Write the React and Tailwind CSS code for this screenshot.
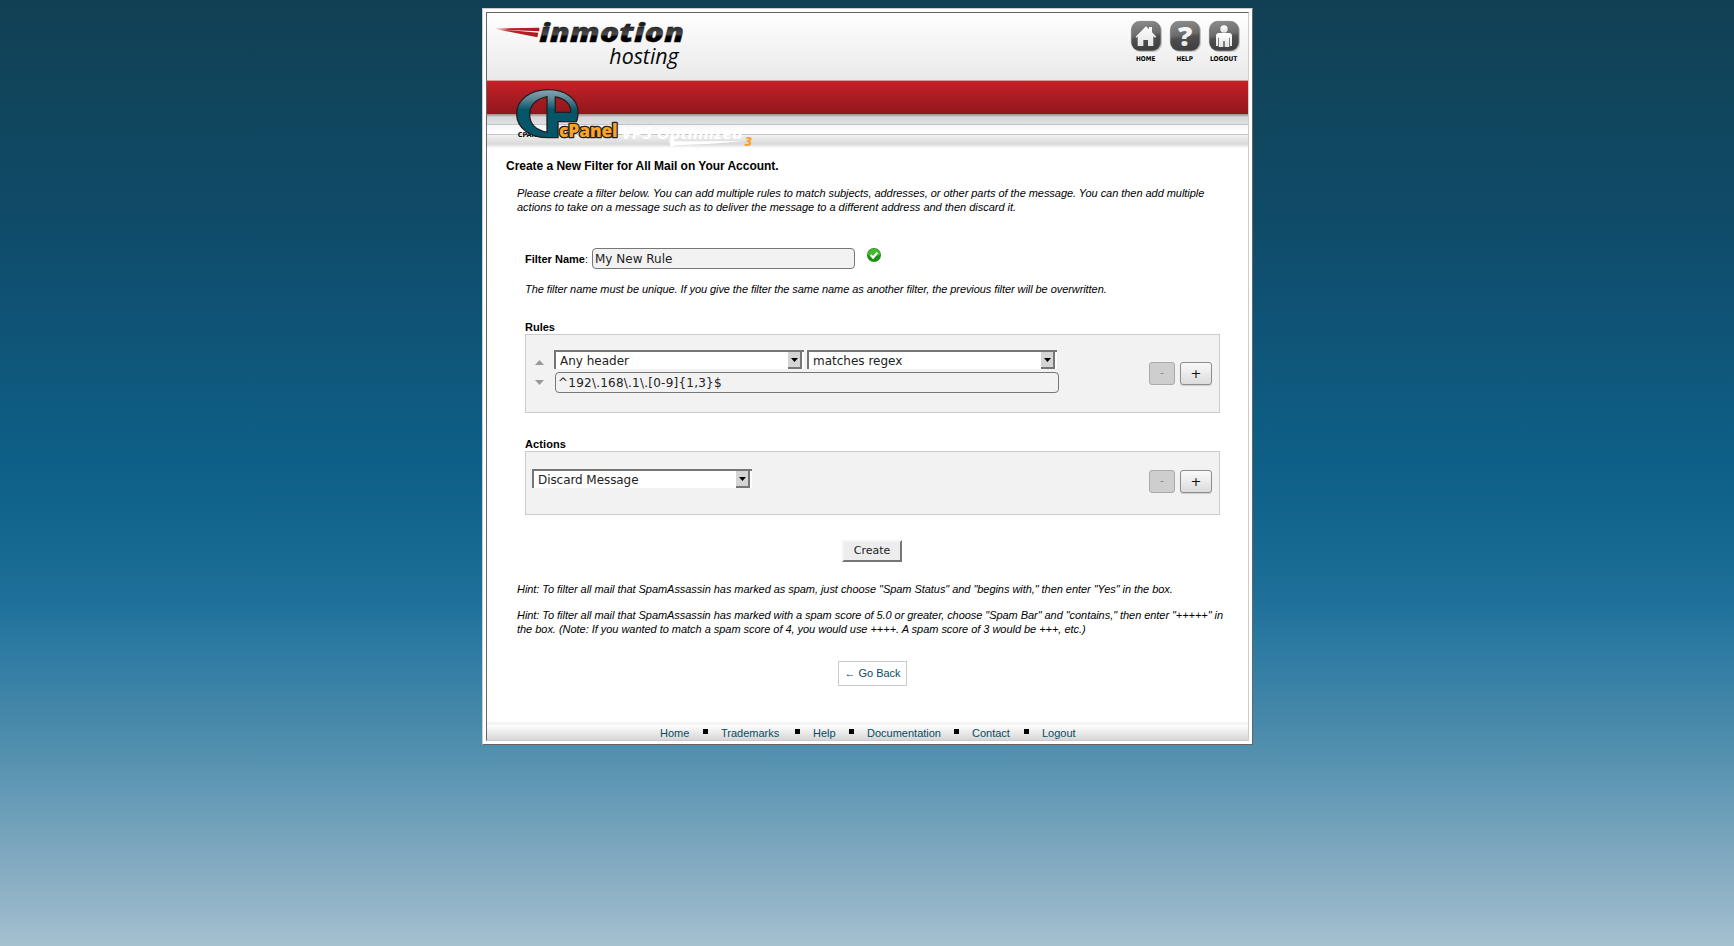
const SANS = "font-['Liberation_Sans',Arial,sans-serif]";

function InMotionLogo() {
  return (
    <svg className="block h-[51px] w-[190px] shrink-0 overflow-visible" viewBox="60 57 570 153">
      <defs>
        <linearGradient id="ink" x1="0" y1="0" x2="0" y2="1">
          <stop offset="0.25" stopColor="#1c1c1c" />
          <stop offset="0.55" stopColor="#4c4c4c" />
          <stop offset="0.62" stopColor="#000" />
          <stop offset="1" stopColor="#000" />
        </linearGradient>
        <linearGradient id="tail" x1="0" y1="0" x2="1" y2="0">
          <stop offset="0" stopColor="#c9252b" stopOpacity="0.45" />
          <stop offset="0.35" stopColor="#bb2026" />
          <stop offset="1" stopColor="#a81d22" />
        </linearGradient>
      </defs>
      <path d="M56 86 L190 83 L190 94 L96 90 Z" fill="url(#tail)" />
      <path d="M62 88 L104 91 L187 98 L184 112 Z" fill="url(#tail)" />
      <text x="190" y="126" fontFamily="'Noto Sans'" fontWeight="900" fontStyle="italic" fontSize="77" textLength="434" lengthAdjust="spacingAndGlyphs" fill="url(#ink)" stroke="#141414" strokeWidth="1">inmotion</text>
      <text x="400" y="191" fontFamily="'Open Sans'" fontStyle="italic" fontSize="67" textLength="208" lengthAdjust="spacingAndGlyphs" fill="#0a0a0a">hosting</text>
    </svg>
  );
}

function CPanelLogo() {
  return (
    <svg className="absolute left-[29px] top-[7px] h-[63px] w-[240px] overflow-visible" viewBox="120 261 720 189">
      <defs>
        <linearGradient id="teal" x1="0" y1="0" x2="0" y2="1">
          <stop offset="0" stopColor="#8aa6b4" />
          <stop offset="0.2" stopColor="#5b8494" />
          <stop offset="0.42" stopColor="#045668" />
          <stop offset="1" stopColor="#045668" />
        </linearGradient>
      </defs>
      <text x="125" y="411" fontFamily="'DejaVu Sans'" fontWeight="700" fontSize="20" textLength="84" lengthAdjust="spacingAndGlyphs" fill="#000">CPANEL</text>
      <path fillRule="evenodd" d="M216 269 C162 269 122 300 122 342 C122 385 164 413 216 413 L246 413 L246 365 L301 365 C305 358 306 348 306 334 C305 296 268 269 216 269 Z M213 290 C178 298 161 318 161 345 C161 371 180 390 213 397 Z M238 291 L238 337 L284 337 C285 313 268 296 238 291 Z" fill="url(#teal)" stroke="#231f20" strokeWidth="4" />
      <text x="249" y="411" fontFamily="'Open Sans'" fontWeight="800" fontSize="50" textLength="176" lengthAdjust="spacingAndGlyphs" fill="#f9a426" stroke="#231f20" strokeWidth="8" paintOrder="stroke" strokeLinejoin="round">cPanel</text>
      <text x="436" y="416" fontFamily="'Open Sans'" fontWeight="700" fontStyle="italic" fontSize="50" textLength="364" lengthAdjust="spacingAndGlyphs" fill="#fff">VPS Optimized</text>
      <path d="M583 412 L592 412 L596 424 H800 Q700 434 594 436 L590 440 H583 Z" fill="#fff" />
      <text x="806" y="438" fontFamily="'Open Sans'" fontWeight="800" fontStyle="italic" fontSize="38" fill="#f7a32b">3</text>
    </svg>
  );
}

function NavIcon({ label, width, children }) {
  return (
    <a className="block w-[39px]">
      <svg className="block h-[43px] w-[39px] overflow-visible" viewBox="0 0 117 129">
        <defs>
          <linearGradient id={"tile" + label} x1="0" y1="0" x2="0.15" y2="1">
            <stop offset="0" stopColor="#8e8e8e" />
            <stop offset="0.5" stopColor="#6c6c6c" />
            <stop offset="0.62" stopColor="#4f4f4f" />
            <stop offset="1" stopColor="#404040" />
          </linearGradient>
          <linearGradient id={"glyph" + label} x1="0" y1="0" x2="0" y2="1">
            <stop offset="0" stopColor="#fff" />
            <stop offset="1" stopColor="#e2e2e2" />
          </linearGradient>
        </defs>
        <rect x="4" y="4" width="89" height="89" rx="26" fill="#000" opacity="0.18" />
        <rect x="1" y="1" width="88" height="88" rx="25" fill={`url(#tile${label})`} stroke="#666" strokeWidth="1.5" />
        <g fill={`url(#glyph${label})`}>{children}</g>
        <text x={44 - width / 2} y="120" fontFamily="'DejaVu Sans'" fontWeight="700" fontSize="20" textLength={width} lengthAdjust="spacingAndGlyphs" fill="#000">{label}</text>
      </svg>
    </a>
  );
}

function Select({ className, children }) {
  return (
    <div className={"flex border-l-2 border-t-2 border-[#767676] bg-white font-['DejaVu_Sans',sans-serif] text-[12px] text-[#222] " + className}>
      <span className="grow pl-[4px] pt-px leading-[17px]">{children}</span>
      <span className="mr-[2px] flex h-[17px] w-[14px] shrink-0 items-center justify-center border-b-2 border-r-2 border-[#767676] bg-[#d4d4d4]">
        <svg className="block h-[4px] w-[7px]" viewBox="0 0 7 4"><path d="M0 0H7L3.5 4Z" fill="#000" /></svg>
      </span>
    </div>
  );
}

function TextInput({ className, children }) {
  return (
    <div className={"h-[21px] rounded-[4px] border border-[#777] bg-[#f2f2f2] pl-[2px] pt-px font-['DejaVu_Sans',sans-serif] text-[12px] leading-[19px] text-[#222] " + className}>{children}</div>
  );
}

function RowButtons() {
  return (
    <div className="flex gap-[5px] font-['DejaVu_Sans',sans-serif] text-[13px]">
      <div className="flex h-[23px] w-[26px] items-center justify-center rounded-[3px] border border-[#aaa] bg-[#cecece] text-[11px] text-[#888]">-</div>
      <div className="flex h-[23px] w-[32px] items-center justify-center rounded-[3px] border border-[#8e8e8e] bg-linear-to-b from-[#fafafa] to-[#dcdcdc] text-[#111] shadow-[0_1px_1px_rgba(0,0,0,0.15)]">+</div>
    </div>
  );
}

export default function App() {
  return (
    <div className={"flex h-[946px] w-full flex-col items-center bg-[linear-gradient(to_bottom,#123f54_0px,#10455c_90px,#0f4b68_220px,#0f5072_283px,#0f577b_362px,#0e6088_470px,#15688f_543px,#1f719b_603px,#327da4_663px,#4889aa_724px,#5f98b4_784px,#7aa6bd_844px,#93b4c8_905px,#a5c1cf_946px)] pl-px pt-[8px] text-[11px] text-black " + SANS}>
      <div className="h-[737px] w-[771px] border border-b-[#666] border-l-[#ccc] border-r-[#666] border-t-[#ccc] bg-white p-[3px]">
        <div className="flex h-full flex-col border border-b-[#ccc] border-l-[#666] border-r-[#ccc] border-t-[#666]">
          <header className="shrink-0">
            <div className="flex h-[67px] justify-between bg-linear-to-b from-white to-[#e9e9e9] pl-[9px] pt-[6px]">
              <InMotionLogo />
              <nav className="mt-[2px] flex">
                <NavIcon label="HOME" width={58}>
                  <path d="M14 47 L45 16 L54 25 V18 H63 V34 L76 47 L72 50 L67 46 V75 H51 V57 H37 V75 H20 V46 L17 50 Z" />
                </NavIcon>
                <NavIcon label="HELP" width={49}>
                  <text x="24" y="74" fontFamily="'Open Sans'" fontWeight="800" fontSize="80" textLength="43" lengthAdjust="spacingAndGlyphs">?</text>
                </NavIcon>
                <NavIcon label="LOGOUT" width={82}>
                  <circle cx="45" cy="24" r="11" />
                  <path d="M30 36 H60 Q69 36 69 45 V75 H63 V50 H61 V78 H47 V60 H43 V78 H29 V50 H27 V75 H21 V45 Q21 36 30 36 Z" />
                </NavIcon>
              </nav>
            </div>
            <div className="relative h-[70px]">
              <div className="h-px bg-[#dd9a9c]" />
              <div className="h-[33px] bg-linear-to-b from-[#c62128] to-[#8f171b]" />
              <div className="h-[10px] bg-linear-to-b from-[#9c8888] via-[#d5d6d7] via-30% to-[#dfe0e1]" />
              <div className="h-px bg-[#c3c4c6]" />
              <div className="h-[9px] bg-linear-to-b from-[#f5f6f7] to-white" />
              <div className="h-px bg-[#c6c6c8]" />
              <div className="h-[13px] bg-linear-to-b from-[#f1f1f1] via-[#d9d9d9] via-70% to-white" />
              <CPanelLogo />
            </div>
          </header>

          <main className="grow pl-[19px]">
            <h1 className="pt-[9px] text-[12px] font-bold leading-[14px] tracking-[-0.03px]">Create a New Filter for All Mail on Your Account.</h1>
            <p className="ml-[11px] mt-[13px] whitespace-nowrap italic leading-[14px]">
              <span className="tracking-[-0.049px]">Please create a filter below. You can add multiple rules to match subjects, addresses, or other parts of the message. You can then add multiple</span>
              <br />
              <span className="tracking-[-0.01px]">actions to take on a message such as to deliver the message to a different address and then discard it.</span>
            </p>

            <div className="ml-[19px] w-[695px]">
              <div className="mt-[34px] flex h-[21px] items-start">
                <span className="w-[67px] shrink-0 whitespace-nowrap pt-[4px] leading-[14px]"><b>Filter Name</b>:</span>
                <TextInput className="w-[263px]">My New Rule</TextInput>
                <svg className="ml-[12px] block h-[14px] w-[14px]" viewBox="0 0 14 14">
                  <circle cx="7" cy="7" r="7" fill="#1d8f14" />
                  <path d="M0.6 7a6.4 6.4 0 0 1 12.8 0Q7 9 .6 7Z" fill="#45b82f" />
                  <path d="M3.6 7l2.5 2.6L10.4 4.6" fill="none" stroke="#fff" strokeWidth="2.2" />
                </svg>
              </div>
              <p className="mt-[13px] whitespace-nowrap italic leading-[14px] tracking-[-0.07px]">The filter name must be unique. If you give the filter the same name as another filter, the previous filter will be overwritten.</p>

              <h2 className="mt-[24px] font-bold leading-[14px]">Rules</h2>
              <section className="flex h-[79px] border border-[#ccc] bg-[#f2f2f2]">
                <div className="ml-[9px] mt-[25px] flex w-[9px] flex-col gap-[15px]">
                  <svg className="block h-[5px] w-[9px]" viewBox="0 0 9 5"><path d="M0 5H9L4.5 0Z" fill="#999" /></svg>
                  <svg className="block h-[5px] w-[9px]" viewBox="0 0 9 5"><path d="M0 0H9L4.5 5Z" fill="#999" /></svg>
                </div>
                <div className="ml-[10px] mt-[15px] grow">
                  <div className="flex gap-[3px]">
                    <Select className="h-[19px] w-[250px]">Any header</Select>
                    <Select className="h-[19px] w-[250px]">matches regex</Select>
                  </div>
                  <TextInput className="ml-px mt-[3px] w-[504px] tracking-[0.23px]">^192\.168\.1\.[0-9]&#123;1,3&#125;$</TextInput>
                </div>
                <div className="mr-[7px] mt-[27px]"><RowButtons /></div>
              </section>

              <h2 className="mt-[24px] font-bold leading-[14px] tracking-[0.1px]">Actions</h2>
              <section className="flex h-[64px] justify-between border border-[#ccc] bg-[#f2f2f2] pl-[6px] pr-[7px] pt-[17px]">
                <Select className="h-[19px] w-[220px] tracking-[-0.07px]">Discard Message</Select>
                <div className="mt-px"><RowButtons /></div>
              </section>

              <button className="ml-[317px] mt-[25px] block h-[22px] w-[60px] border-2 border-b-[#767676] border-l-[#f4f4f4] border-r-[#767676] border-t-[#f4f4f4] bg-[#ededed] font-['DejaVu_Sans',sans-serif] text-[11px] leading-[18px] text-[#222]">Create</button>
            </div>

            <p className="ml-[11px] mt-[20px] whitespace-nowrap italic leading-[14px] tracking-[-0.05px]">Hint: To filter all mail that SpamAssassin has marked as spam, just choose "Spam Status" and "begins with," then enter "Yes" in the box.</p>
            <p className="ml-[11px] mt-[12px] whitespace-nowrap italic leading-[14px]">
              <span className="tracking-[-0.052px]">Hint: To filter all mail that SpamAssassin has marked with a spam score of 5.0 or greater, choose "Spam Bar" and "contains," then enter "+++++" in</span>
              <br />
              <span className="tracking-[-0.033px]">the box. (Note: If you wanted to match a spam score of 4, you would use ++++. A spam score of 3 would be +++, etc.)</span>
            </p>

            <a className="ml-[332px] mt-[25px] flex h-[25px] w-[69px] items-center justify-center whitespace-nowrap border border-[#ccc] text-[#0a4a63]">← Go Back</a>
          </main>

          <footer className="h-[18px] shrink-0 border-t-[3px] border-[#f4f4f4] bg-linear-to-b from-white to-[#d6d6d6] pl-[173px] leading-[16px] text-[#0a4a63]">
            <div className="flex h-[15px] whitespace-nowrap">
              {[["Home", "w-[61px]"], ["Trademarks", "w-[92px]"], ["Help", "w-[54px]"], ["Documentation", "w-[105px]"], ["Contact", "w-[70px]"], ["Logout", "w-[60px]"]].map(([t, w], i) => (
                <span key={t} className={"flex shrink-0 justify-between " + w}>
                  <a>{t}</a>
                  {i < 5 && <i className="mr-[13px] mt-[4px] h-[5px] w-[5px] bg-black" />}
                </span>
              ))}
            </div>
          </footer>
        </div>
      </div>
    </div>
  );
}
